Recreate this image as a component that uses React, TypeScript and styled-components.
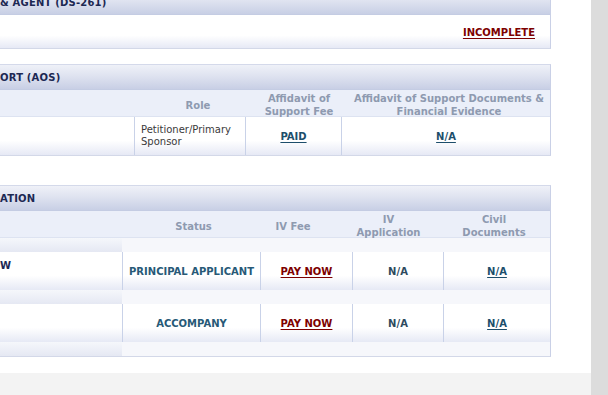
import React from 'react';
import styled, { createGlobalStyle } from 'styled-components';

const Global = createGlobalStyle`
  html, body { margin: 0; padding: 0; background: #ffffff; }
  body {
    font-family: "DejaVu Sans", Verdana, sans-serif;
    font-size: 10px;
    overflow: hidden;
  }
  * { box-sizing: border-box; }
`;

const Page = styled.div`
  display: flex;
  width: 608px;
  height: 395px;
  overflow: hidden;
`;

const Main = styled.div`
  width: 591px;
  display: flex;
  flex-direction: column;
  background: #ffffff;
`;

const Gutter = styled.div`
  width: 17px;
  background: #dcdcdc;
`;

const Content = styled.div`
  flex: 1;
  display: flex;
  flex-direction: column;
  margin-top: -11px;
`;

const Footer = styled.div`
  height: 22px;
  background: #f3f3f3;
`;

const Table = styled.section<{ $mt?: number }>`
  width: 551px;
  margin-top: ${(p) => p.$mt ?? 0}px;
  border-top: 1px solid #d4d9ea;
  border-right: 1px solid #c9d0e6;
  border-bottom: 1px solid #d3d8e8;
`;

const SectionHead = styled.div`
  height: 25px;
  display: flex;
  align-items: center;
  padding-top: 1px;
  background: linear-gradient(to bottom, #eff1f8 0%, #dfe3f0 45%, #c8cfe5 100%);
  border-bottom: 1px solid #c4cce3;
  font-weight: bold;
  color: #1c2853;
  letter-spacing: 0.2px;
  white-space: nowrap;
`;

const Grid = styled.div<{ $cols: string }>`
  display: grid;
  grid-template-columns: ${(p) => p.$cols};
`;

const ColHead = styled(Grid)`
  height: 27px;
  background: #ebeff9;
  border-bottom: 1px solid #dde3f1;
`;

const ColLabel = styled.div`
  display: flex;
  align-items: center;
  justify-content: center;
  padding-top: 2px;
  text-align: center;
  font-weight: bold;
  color: #8e9ab0;
  line-height: 13px;
`;

const rowBg = `linear-gradient(to bottom, #ffffff 0%, #ffffff 62%, #e6e9f5 100%)`;

const DataRow = styled(Grid)`
  height: 38px;
`;

const Cell = styled.div<{ $first?: boolean; $align?: 'left' | 'center'; $top?: boolean }>`
  display: flex;
  align-items: ${(p) => (p.$top ? 'flex-start' : 'center')};
  justify-content: ${(p) => (p.$align === 'left' ? 'flex-start' : 'center')};
  padding: ${(p) => (p.$top ? '8px 0 0 0' : p.$align === 'left' ? '0 0 0 6px' : '0')};
  background: ${rowBg};
  border-left: ${(p) => (p.$first ? 'none' : '1px solid #c9d2e8')};
`;

const StatusRow = styled.div`
  height: 33px;
  display: flex;
  align-items: center;
  justify-content: flex-end;
  padding: 2px 15px 0 0;
  background: ${rowBg};
`;

const Spacer = styled(Grid)`
  height: 14px;
  background: #f6f7fb;
`;

const SpacerLead = styled.div`
  background: linear-gradient(to bottom, #f5f7fb 0%, #e5e8f3 100%);
`;

const Link = styled.a<{ $tone: 'red' | 'teal' }>`
  font-weight: bold;
  text-decoration: underline;
  text-underline-offset: 2px;
  color: ${(p) => (p.$tone === 'red' ? '#7d0000' : '#1d4e6b')};
  cursor: pointer;
`;

const Value = styled.span<{ $tone?: 'teal' | 'slate' }>`
  font-weight: bold;
  color: ${(p) => (p.$tone === 'slate' ? '#2e4a5e' : '#275977')};
`;

const Plain = styled.span`
  color: #3a3a3a;
  line-height: 12px;
`;

const Name = styled.span`
  font-weight: bold;
  color: #1c2853;
`;

const AOS_COLS = '134px 111px 96px 209px';
const AOS_HEAD = '146px 104px 98px 202px';
const IV_COLS = '122px 138px 92px 91px 107px';
const IV_HEAD = '140px 107px 92px 99px 112px';

export default function App() {
  const ivRows = [
    { name: 'W', status: 'PRINCIPAL APPLICANT' },
    { name: '', status: 'ACCOMPANY' },
  ];
  return (
    <>
      <Global />
      <Page>
        <Main>
          <Content>
            <Table>
              <SectionHead>&amp; AGENT (DS-261)</SectionHead>
              <StatusRow>
                <Link $tone="red">INCOMPLETE</Link>
              </StatusRow>
            </Table>

            <Table $mt={15}>
              <SectionHead>ORT (AOS)</SectionHead>
              <ColHead $cols={AOS_HEAD}>
                <ColLabel />
                <ColLabel>Role</ColLabel>
                <ColLabel>
                  Affidavit of
                  <br />
                  Support Fee
                </ColLabel>
                <ColLabel>
                  Affidavit of Support Documents &amp;
                  <br />
                  Financial Evidence
                </ColLabel>
              </ColHead>
              <DataRow $cols={AOS_COLS}>
                <Cell $first />
                <Cell $align="left">
                  <Plain>
                    Petitioner/Primary
                    <br />
                    Sponsor
                  </Plain>
                </Cell>
                <Cell>
                  <Link $tone="teal">PAID</Link>
                </Cell>
                <Cell>
                  <Link $tone="teal">N/A</Link>
                </Cell>
              </DataRow>
            </Table>

            <Table $mt={29}>
              <SectionHead>ATION</SectionHead>
              <ColHead $cols={IV_HEAD}>
                <ColLabel />
                <ColLabel>Status</ColLabel>
                <ColLabel>IV Fee</ColLabel>
                <ColLabel>
                  IV
                  <br />
                  Application
                </ColLabel>
                <ColLabel>
                  Civil
                  <br />
                  Documents
                </ColLabel>
              </ColHead>
              <Spacer $cols="122px 1fr">
                <SpacerLead />
                <div />
              </Spacer>
              {ivRows.map((r) => (
                <React.Fragment key={r.status}>
                  <DataRow $cols={IV_COLS}>
                    <Cell $first $top $align="left">
                      <Name>{r.name}</Name>
                    </Cell>
                    <Cell>
                      <Value>{r.status}</Value>
                    </Cell>
                    <Cell>
                      <Link $tone="red">PAY NOW</Link>
                    </Cell>
                    <Cell>
                      <Value $tone="slate">N/A</Value>
                    </Cell>
                    <Cell>
                      <Link $tone="teal">N/A</Link>
                    </Cell>
                  </DataRow>
                  <Spacer $cols="122px 1fr">
                    <SpacerLead />
                    <div />
                  </Spacer>
                </React.Fragment>
              ))}
            </Table>
          </Content>
          <Footer />
        </Main>
        <Gutter />
      </Page>
    </>
  );
}
